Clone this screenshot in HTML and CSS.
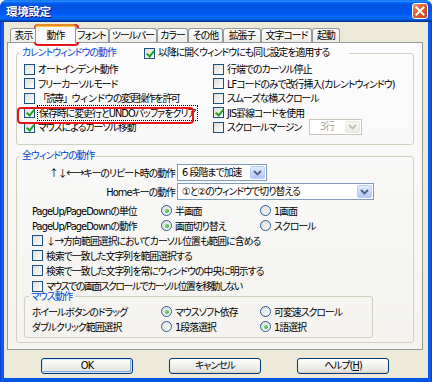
FILE: index.html
```html
<!DOCTYPE html>
<html lang="ja">
<head>
  <meta charset="UTF-8">
  <title>環境設定</title>
  <link rel="stylesheet" href="styles.css">
</head>
<body>
  <div class="window">
    <div class="titlebar">
      <span class="title">環境設定</span>
      <button class="close" aria-label="閉じる">
        <svg width="10" height="10" viewBox="0 0 10 10"><path d="M1.5 1.5 L8.5 8.5 M8.5 1.5 L1.5 8.5" stroke="#fff" stroke-width="2" stroke-linecap="square"/></svg>
      </button>
    </div>

    <div class="client">
      <div class="tabs">
        <div class="tab t-hyouji">表示</div>
        <div class="tab active">動作</div>
        <div class="tab t-font">フォント</div>
        <div class="tab t-tool">ツールバー</div>
        <div class="tab t-color">カラー</div>
        <div class="tab t-other">その他</div>
        <div class="tab t-ext">拡張子</div>
        <div class="tab t-code">文字コード</div>
        <div class="tab t-boot">起動</div>
      </div>

      <div class="panel">
        <fieldset class="group group-current">
          <legend class="legend-wide">
            <span class="legend-title">カレントウィンドウの動作</span>
            <label class="opt"><span class="cb on"></span>以降に開くウィンドウにも同じ設定を適用する</label>
          </legend>
          <div class="grid2">
            <label class="opt"><span class="cb"></span>オートインデント動作</label>
            <label class="opt"><span class="cb"></span>行端でのカーソル停止</label>
            <label class="opt"><span class="cb"></span>フリーカーソルモード</label>
            <label class="opt"><span class="cb"></span>LFコードのみで改行挿入(カレントウィンドウ)</label>
            <label class="opt"><span class="cb"></span><span class="full">「読専」ウィンドウの変更操作を許可</span></label>
            <label class="opt"><span class="cb"></span>スムーズな横スクロール</label>
            <label class="opt"><span class="cb on"></span><span class="focus">保存時に変更行とUNDOバッファをクリア</span></label>
            <label class="opt"><span class="cb on"></span>JIS罫線コードを使用</label>
            <label class="opt"><span class="cb on"></span>マウスによるカーソル移動</label>
            <div class="with-combo">
              <label class="opt"><span class="cb"></span>スクロールマージン</label>
              <div class="combo combo-margin disabled">
                <span class="val">3行</span>
                <span class="drop"><svg width="9" height="6" viewBox="0 0 9 6"><path d="M1 1 L4.5 4.5 L8 1" fill="none" stroke="#C0BFB5" stroke-width="1.8"/></svg></span>
              </div>
            </div>
          </div>
        </fieldset>

        <fieldset class="group group-all">
          <legend>全ウィンドウの動作</legend>
          <div class="body">
            <div class="row row-combo">
              <span class="lbl-r"><span class="arrows">↑↓←→</span>キーのリピート時の動作</span>
              <div class="combo combo-speed">
                <span class="val">6 段階まで加速</span>
                <span class="drop"><svg width="9" height="6" viewBox="0 0 9 6"><path d="M1 1 L4.5 4.5 L8 1" fill="none" stroke="#4D6185" stroke-width="1.8"/></svg></span>
              </div>
            </div>
            <div class="row row-combo">
              <span class="lbl-r">Homeキーの動作</span>
              <div class="combo combo-home">
                <span class="val">①と②のウィンドウで切り替える</span>
                <span class="drop"><svg width="9" height="6" viewBox="0 0 9 6"><path d="M1 1 L4.5 4.5 L8 1" fill="none" stroke="#4D6185" stroke-width="1.8"/></svg></span>
              </div>
            </div>
            <div class="row first-radio">
              <span class="lbl">PageUp/PageDownの単位</span>
              <label class="opt col"><span class="rb on"></span>半画面</label>
              <label class="opt"><span class="rb"></span>1画面</label>
            </div>
            <div class="row">
              <span class="lbl">PageUp/PageDownの動作</span>
              <label class="opt col"><span class="rb on"></span>画面切り替え</label>
              <label class="opt"><span class="rb"></span>スクロール</label>
            </div>
            <div class="row"><label class="opt"><span class="cb"></span><span><span class="arrows">↓→</span>方向範囲選択においてカーソル位置も範囲に含める</span></label></div>
            <div class="row"><label class="opt"><span class="cb"></span>検索で一致した文字列を範囲選択する</label></div>
            <div class="row"><label class="opt"><span class="cb"></span>検索で一致した文字列を常にウィンドウの中央に明示する</label></div>
            <div class="row row-last"><label class="opt"><span class="cb"></span><span class="tight">マウスでの画面スクロールでカーソル位置を移動しない</span></label></div>

            <fieldset class="group group-mouse">
              <legend>マウス動作</legend>
              <div class="mouse-body">
                <div class="mrow">
                  <span class="lbl">ホイールボタンのドラッグ</span>
                  <label class="opt col"><span class="rb on"></span>マウスソフト依存</label>
                  <label class="opt"><span class="rb"></span>可変速スクロール</label>
                </div>
                <div class="mrow">
                  <span class="lbl">ダブルクリック範囲選択</span>
                  <label class="opt col"><span class="rb"></span>1段落選択</label>
                  <label class="opt"><span class="rb on"></span>1語選択</label>
                </div>
              </div>
            </fieldset>
          </div>
        </fieldset>
      </div>

      <div class="buttons">
        <button class="btn default">OK</button>
        <button class="btn">キャンセル</button>
        <button class="btn">ヘルプ(<u>H</u>)</button>
      </div>
    </div>

    <div class="mark mark-tab"></div>
    <div class="mark mark-row"></div>
  </div>
</body>
</html>
```

FILE: styles.css
```css
* {
  box-sizing: border-box;
}

html,
body {
  margin: 0;
  padding: 0;
}

body {
  width: 432px;
  height: 382px;
  overflow: hidden;
  font-family: "DejaVu Sans", "Noto Sans CJK JP", sans-serif;
  font-size: 9.8px;
  letter-spacing: -0.9px;
  font-feature-settings: "palt";
  color: #000;
  background: #fff;
}

.window {
  position: relative;
  width: 432px;
  height: 382px;
  display: flex;
  flex-direction: column;
  border-radius: 7px 7px 0 0;
  background: linear-gradient(to right, #0831D9, #1661EE 2px, #0055E5 4px, #0055E5 428px, #1661EE 430px, #0831D9);
}

/* title bar */
.titlebar {
  height: 22px;
  flex: none;
  display: flex;
  align-items: center;
  justify-content: space-between;
  padding: 0 4px 0 6px;
  border-radius: 7px 7px 0 0;
  background: linear-gradient(to bottom, #0058EE 0%, #3593FF 4%, #288EFF 6%, #127DFF 8%, #036FFC 10%, #0262EE 14%, #0057E5 20%, #0054E3 24%, #0055EB 56%, #005BF5 66%, #026AFE 76%, #0062EF 86%, #0052D6 92%, #0040AB 94%, #003092 100%);
}

.title {
  color: #fff;
  font-family: "Noto Sans CJK JP", sans-serif;
  font-weight: bold;
  font-size: 11.5px;
  letter-spacing: -0.3px;
  text-shadow: 1px 1px #0F1089;
}

.close {
  width: 16px;
  height: 16px;
  padding: 0;
  display: flex;
  align-items: center;
  justify-content: center;
  border: 1px solid #fff;
  border-radius: 3px;
  background: linear-gradient(135deg, #F0A07E, #E2602F 40%, #C8431A);
}

/* client area */
.client {
  flex: 1;
  margin: 0 4px 4px;
  padding: 2px 5px 0 3px;
  background: #ECE9D8;
}

.tabs {
  position: relative;
  z-index: 1;
  display: flex;
  align-items: flex-end;
  height: 18px;
  margin-left: 3px;
}

.tab {
  height: 14px;
  border: 1px solid #919B9C;
  border-bottom: none;
  border-radius: 3px 3px 0 0;
  background: linear-gradient(#FFFFFF, #F3F3EF 60%, #ECEBE6);
  line-height: 13px;
  text-align: center;
  white-space: nowrap;
}

.t-hyouji { width: 27px; }
.t-font { width: 35px; }
.t-tool { width: 48px; }
.t-color { width: 31px; }
.t-other { width: 35px; }
.t-ext { width: 38px; }
.t-code { width: 51px; }
.t-boot { width: 28px; }

.tab.active {
  width: 41px;
  height: 19px;
  margin: 0 -2px -1px;
  padding-top: 3px;
  border-top: 2px solid #E68B2C;
  box-shadow: inset 0 1px #FFC73C;
  background: #FCFCFE;
  position: relative;
}

.panel {
  width: 416px;
  height: 308px;
  padding: 3px 8px 0;
  border: 1px solid #919B9C;
  background: linear-gradient(#FCFCFE, #F4F3EE);
}

/* group boxes */
.group {
  margin: 0;
  padding: 0;
  min-width: 0;
  border: 1px solid #D0D0BF;
  border-radius: 3px;
}

.group legend {
  margin-left: 3px;
  padding: 0 2px;
  line-height: 14px;
  color: #0046D5;
}

.legend-wide {
  display: flex;
  align-items: center;
  width: 329px;
}

.legend-title {
  width: 122px;
}

.legend-wide .opt {
  color: #000;
}

.grid2 {
  display: grid;
  grid-template-columns: 189px 1fr;
  grid-auto-rows: 14.5px;
  padding: 2px 0 9.5px 7px;
}

.with-combo {
  display: flex;
  align-items: center;
}

.with-combo .opt {
  width: 96px;
}

.full {
  font-feature-settings: normal;
  letter-spacing: -1.5px;
}

.tight {
  letter-spacing: -1.4px;
}

.group-all {
  margin-top: 4px;
}

.body {
  padding: 0 0 4px 7px;
}

.row {
  display: flex;
  align-items: center;
  height: 15px;
  padding-left: 8px;
  white-space: nowrap;
}

.row-combo {
  height: 19px;
}

.first-radio {
  margin-top: 2px;
}

.row-last {
  height: 13px;
  align-items: flex-start;
  padding-top: 1px;
}

.arrows {
  font-family: "Noto Sans CJK JP", sans-serif;
  letter-spacing: -1.2px;
}

.lbl-r {
  width: 143px;
  margin-right: 2px;
  text-align: right;
}

.lbl {
  width: 129px;
}

.col {
  width: 99px;
}

.group-mouse {
  width: 349px;
}

.group-mouse legend {
  margin-left: 4px;
  line-height: 11px;
}

.mouse-body {
  padding: 2px 0 3px 7px;
}

.mrow {
  display: flex;
  align-items: center;
  height: 15px;
  white-space: nowrap;
}

/* controls */
.opt {
  display: flex;
  align-items: center;
  gap: 3px;
  white-space: nowrap;
}

.cb {
  position: relative;
  flex: none;
  width: 11px;
  height: 11px;
  border: 1px solid #1C5180;
  background: linear-gradient(135deg, #DCDCD7, #FFFFFF);
}

.cb.on::after {
  content: "";
  position: absolute;
  left: 3px;
  top: 0px;
  width: 3px;
  height: 6px;
  border: solid #21A121;
  border-width: 0 2px 2px 0;
  transform: rotate(40deg);
}

.rb {
  position: relative;
  flex: none;
  width: 11px;
  height: 11px;
  border: 1px solid #2A5B95;
  border-radius: 50%;
  background: linear-gradient(135deg, #DCDCD7, #FFFFFF);
}

.rb.on::after {
  content: "";
  position: absolute;
  left: 2.5px;
  top: 2.5px;
  width: 4px;
  height: 4px;
  border-radius: 50%;
  background: radial-gradient(circle at 35% 35%, #7BE37A, #21A121);
}

.focus {
  padding: 0 1px;
  outline: 1px dotted #000;
}

.combo {
  display: flex;
  align-items: stretch;
  height: 17px;
  border: 1px solid #7F9DB9;
  background: #fff;
}

.combo .val {
  flex: 1;
  padding-left: 4px;
  line-height: 15px;
  white-space: nowrap;
  overflow: hidden;
}

.combo .drop {
  width: 15px;
  margin: 1px;
  display: flex;
  align-items: center;
  justify-content: center;
  border: 1px solid #B9CDF6;
  border-radius: 2px;
  background: linear-gradient(#E3EBFE, #C4D5FB 60%, #B3C8F5);
}

.combo-speed { width: 90px; }
.combo-home { width: 197px; }

.combo-margin {
  width: 53px;
  height: 16px;
}

.combo.disabled {
  border-color: #C9C7BA;
}

.combo.disabled .val {
  color: #ACA899;
  padding-left: 10px;
  line-height: 14px;
}

.combo.disabled .drop {
  border-color: #E8E7E0;
  background: linear-gradient(#F7F7F4, #ECEBE6);
}

/* dialog buttons */
.buttons {
  display: flex;
  justify-content: center;
  gap: 36px;
  margin-top: 8px;
}

.btn {
  width: 92px;
  height: 16px;
  padding: 0;
  border: 1px solid #003C74;
  border-radius: 3px;
  font: inherit;
  letter-spacing: inherit;
  font-feature-settings: inherit;
  line-height: 14px;
  color: #000;
  background: linear-gradient(#FFFFFF, #F3F3EE 40%, #E6E5DE 85%, #D6D0C5);
}

.btn.default {
  box-shadow: inset 0 0 0 1px #CEE7FF, inset -1px -1px 0 1px #8AA8EC;
}

/* red highlight marks */
.mark {
  position: absolute;
  border: 2px solid #E8141B;
  border-radius: 4px;
  pointer-events: none;
}

.mark-tab {
  left: 34px;
  top: 24px;
  width: 45px;
  height: 22px;
}

.mark-row {
  left: 17px;
  top: 107px;
  width: 177px;
  height: 17px;
}
```
